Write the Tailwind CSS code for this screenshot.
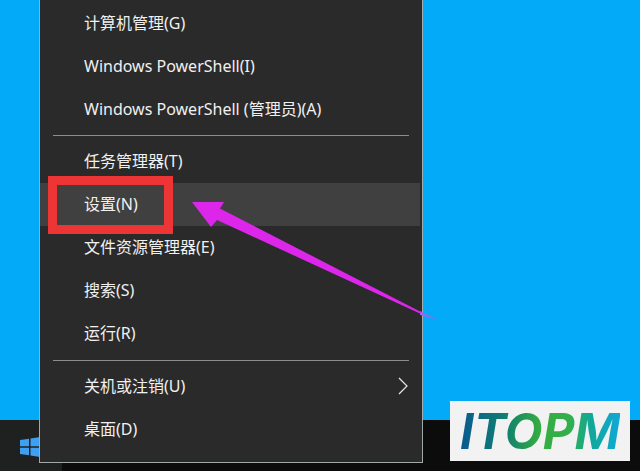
<!DOCTYPE html>
<html lang="zh-CN">
<head>
<meta charset="utf-8">
<script src="https://cdn.jsdelivr.net/npm/@tailwindcss/browser@4"></script>
</head>
<body class="m-0">
<div class="relative w-[640px] h-[471px] overflow-hidden bg-[#02aaf8] font-['Noto_Sans','Noto_Sans_CJK_SC',sans-serif] text-[16px] text-[#f0f0f0]">
  <!-- Taskbar -->
  <div class="absolute left-0 right-0 bottom-0 h-[51px] flex bg-[#0c0c0c]">
    <div class="w-[62px] h-full bg-[#1f2020] relative">
      <svg class="absolute left-[20px] top-[17px]" width="20" height="20" viewBox="0 0 20 20"><path fill="#3f9ff0" d="M0 3 L9 1.7 V9.3 H0 Z M10.5 1.5 L20 0 V9.3 H10.5 Z M0 10.7 H9 V18.3 L0 17 Z M10.5 10.7 H20 V20 L10.5 18.5 Z"/></svg>
    </div>
  </div>

  <!-- Context menu -->
  <div class="absolute left-[39px] top-[-1px] w-[384px] h-[464px] border border-[#a3a8aa] bg-[#2a2a2a] flex flex-col">
    <div class="h-[2px]"></div>
    <div class="h-[43px] flex items-center pl-[44px] pb-[2px]">计算机管理(G)</div>
    <div class="h-[43px] flex items-center pl-[44px] pb-[2px]">Windows PowerShell(I)</div>
    <div class="h-[43px] flex items-center pl-[44px] pb-[2px]">Windows PowerShell (管理员)(A)</div>
    <div class="h-[5px] flex items-end px-[13px]"><div class="w-full h-[1px] bg-[#8d8d8d]"></div></div>
    <div class="h-[4px]"></div>
    <div class="h-[43px] flex items-center pl-[44px] pb-[2px]">任务管理器(T)</div>
    <div class="h-[43px] flex items-center pl-[44px] pb-[2px] bg-[#404040] mr-[2px]">设置(N)</div>
    <div class="h-[43px] flex items-center pl-[44px] pb-[2px]">文件资源管理器(E)</div>
    <div class="h-[43px] flex items-center pl-[44px] pb-[2px]">搜索(S)</div>
    <div class="h-[43px] flex items-center pl-[44px] pb-[2px]">运行(R)</div>
    <div class="h-[6px] flex items-end px-[13px]"><div class="w-full h-[1px] bg-[#8d8d8d]"></div></div>
    <div class="h-[4px]"></div>
    <div class="h-[43px] flex items-center justify-between pl-[44px] pb-[2px] pr-[14px]">
      <span>关机或注销(U)</span>
      <svg width="10" height="18" viewBox="0 0 10 18" fill="none" stroke="#e8e8e8" stroke-width="1.2"><path d="M1 1 L9 9 L1 17"/></svg>
    </div>
    <div class="h-[43px] flex items-center pl-[44px] pb-[2px]">桌面(D)</div>
  </div>

  <!-- Red highlight box -->
  <div class="absolute left-[48px] top-[176px] w-[125px] h-[58px] border-[9px] border-[#ee3535]"></div>

  <!-- Arrow -->
  <svg class="absolute left-0 top-0" width="640" height="471" viewBox="0 0 640 471">
    <path fill="#8f6cea" d="M420 311 L438 320 L420 315 Z"/>
    <path fill="#dc26ea" d="M192 202 L224 202 L220 208.500 L421 312 L421 314 L217 220 L211 227 Z"/>
  </svg>

  <!-- Logo -->
  <div class="absolute left-[450px] top-[401px] w-[180px] h-[60px] bg-[#f2f2f3] flex items-center justify-center">
    <span class="font-['Inter',sans-serif] font-bold italic text-[49px] leading-none bg-clip-text text-transparent bg-[linear-gradient(90deg,#0a5a90_0%,#0f7f70_28%,#35ad40_50%,#33b04a_68%,#10a89c_82%,#10a8d8_100%)]">ITOPM</span>
  </div>
</div>
</body>
</html>
